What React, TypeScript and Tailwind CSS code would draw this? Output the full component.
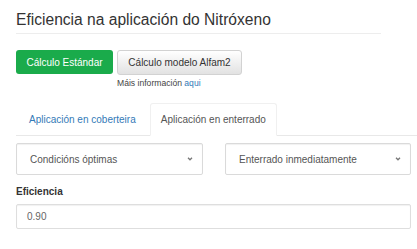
const Chevron = () => (
  <svg width="6" height="4" viewBox="0 0 6 4" className="shrink-0">
    <path d="M1 .8l2 2 2-2" fill="none" stroke="#777" strokeWidth="1.3" />
  </svg>
);

const Select = ({ label }: { label: string }) => (
  <div className="flex h-[32px] items-center justify-between rounded-[2px] border border-[#dadada] bg-white pl-[13px] pr-[9px] text-[10px] text-[#555] shadow-[inset_0_1px_1px_rgba(0,0,0,0.06)]">
    <span>{label}</span>
    <Chevron />
  </div>
);

export default function App() {
  return (
    <div className="h-[249px] w-[417px] overflow-hidden bg-white pl-[16px] pr-[6px] font-['Liberation_Sans',Arial,sans-serif] text-[#333]">
      <div className="mr-[30px] border-b border-[#ededed] pt-[11px] pb-[4px]">
        <h3 className="text-[15.6px] leading-[18px] text-[#333]">Eficiencia na aplicación do Nitróxeno</h3>
      </div>

      <div className="mt-[16px] flex gap-[4px]">
        <button className="h-[24px] w-[97px] rounded-[3px] bg-[#1aab4b] text-[10px] text-white">Cálculo Estándar</button>
        <div className="flex flex-col">
          <button className="h-[25px] w-[125px] rounded-[3px] border border-[#d2d2d2] bg-gradient-to-b from-white to-[#e2e2e2] text-[10px] text-[#333]">
            Cálculo modelo Alfam2
          </button>
          <p className="mt-[3px] text-[8.6px] leading-[10px] text-[#444]">
            Máis información <span className="text-[#337ab7]">aqui</span>
          </p>
        </div>
      </div>

      <div className="mr-[-6px] mt-[15px] flex border-b border-[#e8e8e8]">
        <div className="mb-[-1px] flex h-[32px] items-center px-[13px] text-[10px] text-[#337ab7]">Aplicación en coberteira</div>
        <div className="mb-[-1px] ml-[1px] flex h-[33px] items-center rounded-t-[3px] border border-[#f0f0f0] border-b-white bg-white px-[10px] text-[10px] text-[#555]">
          Aplicación en enterrado
        </div>
      </div>

      <div className="mt-[7px] grid grid-cols-[187px_186px] gap-[22px]">
        <Select label="Condicións óptimas" />
        <Select label="Enterrado inmediatamente" />
      </div>

      <div className="mt-[11px] text-[10px] font-bold leading-[12px] text-[#333]">Eficiencia</div>
      <div className="mt-[6px] flex h-[25px] w-[395px] items-center rounded-[2px] border border-[#dedede] pl-[10px] text-[10px] text-[#666] shadow-[inset_0_1px_1px_rgba(0,0,0,0.06)]">
        0.90
      </div>
    </div>
  );
}
